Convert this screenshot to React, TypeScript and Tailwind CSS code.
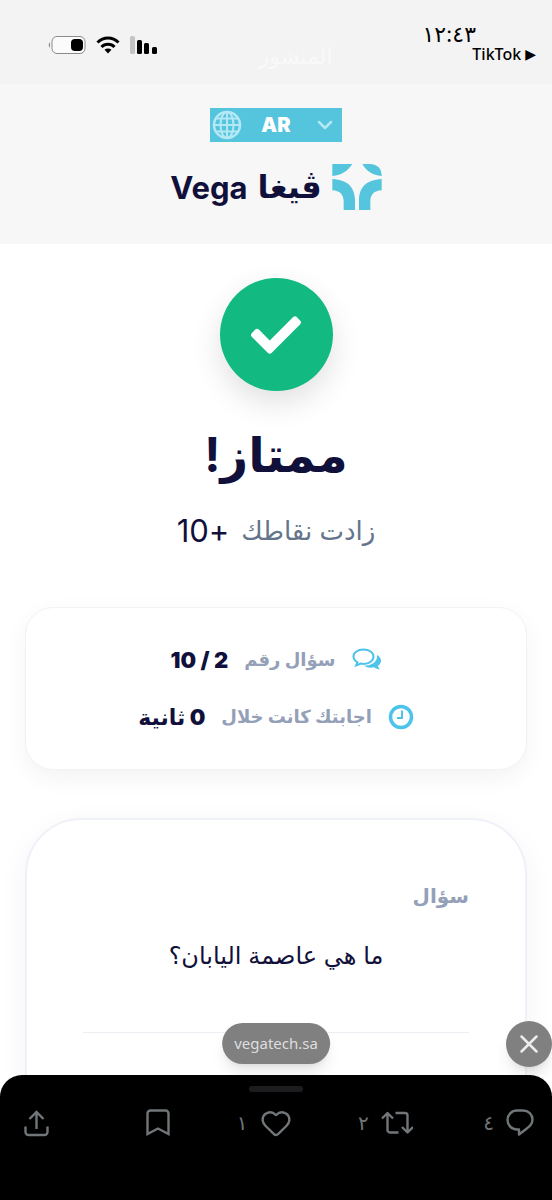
import type { ReactNode } from 'react'
import { ChevronDown, Heart, X } from 'lucide-react'
import { FaCheck } from 'react-icons/fa'

const strokeProps = {
  fill: 'none',
  stroke: 'currentColor',
  strokeWidth: 2.4,
  strokeLinejoin: 'round' as const,
}

function BatteryIcon() {
  return (
    <svg width="38" height="18" viewBox="0 0 38 18" aria-hidden="true">
      <rect x="4" y="0.5" width="33" height="17" rx="5" fill="#fbfbfb" stroke="#8a8a8a" />
      <path d="M2 6.5C0.3 7 0.3 11 2 11.5z" fill="#8a8a8a" />
      <rect x="23" y="3" width="12" height="12" rx="4" />
    </svg>
  )
}

function WifiIcon() {
  return (
    <svg width="24" height="18" viewBox="0 0 24 18" fill="none" stroke="#000" strokeWidth="3" aria-hidden="true">
      <path d="M1.5 6.5C7.5 0.5 16.5 0.5 22.5 6.5" />
      <path d="M5.5 11C9 7.2 15 7.2 18.5 11" />
      <path d="M8.5 13.8C10.5 12 13.5 12 15.5 13.8L12 17.5z" fill="#000" stroke="none" />
    </svg>
  )
}

function SignalIcon() {
  return (
    <svg width="27" height="18" viewBox="0 0 27 18" aria-hidden="true">
      <rect x="0" y="0" width="5" height="18" rx="1.5" fill="#c4c4c4" />
      <rect x="7" y="4" width="5" height="14" rx="1.5" />
      <rect x="14" y="7" width="5" height="11" rx="1.5" />
      <rect x="22" y="11" width="5" height="7" rx="1.5" />
    </svg>
  )
}

function GlobeIcon() {
  return (
    <svg width="30" height="30" viewBox="0 0 30 30" fill="none" stroke="currentColor" strokeWidth="2" aria-hidden="true">
      <circle cx="15" cy="15" r="13" strokeWidth="2.5" />
      <ellipse cx="15" cy="15" rx="6.5" ry="13" />
      <path d="M15 2v26M2 15h26M4 8.5h22M4 21.5h22" />
    </svg>
  )
}

function VegaMark() {
  return (
    <svg width="50" height="46" viewBox="0 0 148 138" fill="#55c5de" aria-hidden="true">
      <path d="M0 0H60C46 22 28 33 0 36z" />
      <path d="M90 0H112Q148 2 148 36C120 33 102 22 90 0z" />
      <path d="M0 45C48 48 66 70 68 106V138H34V112C34 92 22 80 0 79z" />
      <path d="M148 45C100 48 82 70 80 106V138H114V112C114 92 126 80 148 79z" />
    </svg>
  )
}

function CommentsIcon() {
  return (
    <svg width="30" height="24" viewBox="0 0 30 24" aria-hidden="true">
      <path
        d="M11.5 1.5C5.7 1.5 1.5 4.6 1.5 8.5c0 2.5 1.6 4.5 4 5.9L4 17.5c2-.4 3.5-1.1 4.6-2 1 .3 1.9.4 2.9.4 5.8 0 10-3.2 10-7.3S17.3 1.5 11.5 1.5z"
        fill="none"
        stroke="currentColor"
        strokeWidth="2"
      />
      <path
        d="M25 7c2.3 1.3 4 3.3 4 5.8 0 2.2-1.3 4-3.2 5.2.3 1.3 1.1 2.5 2.2 3.6-2.3-.2-4.2-1-5.7-2.3-4 .8-7.5.3-10.3-1.5C19 17.8 25 14 25 9z"
        fill="currentColor"
      />
    </svg>
  )
}

function ClockIcon() {
  return (
    <svg width="26" height="26" viewBox="0 0 26 26" fill="none" stroke="currentColor" aria-hidden="true">
      <circle cx="13" cy="13" r="10.5" strokeWidth="3.5" />
      <path d="M14 6.5V14H9" strokeWidth="2" />
    </svg>
  )
}

function ReplyIcon() {
  return (
    <svg width="28" height="28" viewBox="0 0 28 28" {...strokeProps}>
      <path d="M11 1.5h6c5.5 0 9.5 4 9.5 9 0 4.2-2.6 7-6 9.2L13 25.5v-5h-2C5.5 20.5 1.5 16.2 1.5 11S5.5 1.5 11 1.5z" />
    </svg>
  )
}

function RepostIcon() {
  return (
    <svg width="32" height="24" viewBox="0 0 32 24" {...strokeProps}>
      <path d="M1 7.5L6.5 2L12 7.5M6.5 2.5V19a2.5 2.5 0 0 0 2.5 2.5h8.5" />
      <path d="M14.5 2H24a2.5 2.5 0 0 1 2.5 2.5V21M21 16l5.5 5.5L32 16" />
    </svg>
  )
}

function BookmarkIcon() {
  return (
    <svg width="24" height="28" viewBox="0 0 24 28" {...strokeProps} strokeLinejoin="miter">
      <path d="M1.5 25V4.5a3 3 0 0 1 3-3h15a3 3 0 0 1 3 3V25L12 19.5z" />
    </svg>
  )
}

function ShareIcon() {
  return (
    <svg width="25" height="27" viewBox="0 0 25 27" {...strokeProps} strokeLinejoin="miter">
      <path d="M12.5 19V2M5.5 9l7-7 7 7M1.5 16.5V22a3 3 0 0 0 3 3h16a3 3 0 0 0 3-3v-5.5" />
    </svg>
  )
}

type StatRowProps = {
  icon: ReactNode
  label: string
  children: ReactNode
}

function StatRow({ icon, label, children }: StatRowProps) {
  return (
    <div className="flex items-center justify-center gap-4">
      <span className="text-[#4cc3ea]">{icon}</span>
      <dt className="text-lg leading-8 font-bold text-[#93a0b8]">{label}</dt>
      <dd className="text-[22px] leading-8 font-black text-[#10103a]">{children}</dd>
    </div>
  )
}

const actions = [
  { label: 'رد', count: '٤', icon: <ReplyIcon /> },
  { label: 'إعادة نشر', count: '٢', icon: <RepostIcon /> },
  { label: 'إعجاب', count: '١', icon: <Heart size={32} strokeWidth={1.8} /> },
  { label: 'حفظ', count: '', icon: <BookmarkIcon /> },
]

export default function App() {
  return (
    <div
      dir="rtl"
      lang="ar"
      className="flex h-screen flex-col overflow-hidden bg-white font-['Inter','DejaVu_Sans',sans-serif] text-[#10103a]"
    >
      <div className="flex h-[84px] shrink-0 items-start justify-between bg-[#f3f3f3] text-black">
        <div className="flex flex-col pt-5 pr-4">
          <span className="pr-[60px] text-[22px] leading-7">١٢:٤٣</span>
          <span
            dir="ltr"
            className="flex items-center gap-1 self-start font-['Noto_Sans','DejaVu_Sans',sans-serif] text-base leading-3 font-medium"
          >
            TikTok <span className="text-sm leading-3">▶</span>
          </span>
        </div>
        <span className="pt-10 pl-3 text-[22px] text-[#f9f9f9]">المنشور</span>
        <div dir="ltr" className="flex items-center gap-[10px] pt-9 pl-12">
          <BatteryIcon />
          <WifiIcon />
          <SignalIcon />
        </div>
      </div>

      <header className="flex shrink-0 flex-col items-center gap-[22px] bg-[#f7f7f7] pt-6 pb-[34px]">
        <label dir="ltr" className="relative flex h-[34px] w-[132px] items-center bg-[#55c5de] text-[#b4e8f4]">
          <span className="pointer-events-none absolute left-[2px]">
            <GlobeIcon />
          </span>
          <select
            aria-label="اللغة"
            className="h-full w-full appearance-none bg-transparent text-center text-xl font-black text-white [text-align-last:center]"
          >
            <option>AR</option>
            <option>EN</option>
          </select>
          <ChevronDown size={24} strokeWidth={2.5} className="pointer-events-none absolute right-[5px]" />
        </label>
        <div className="flex h-[46px] items-center gap-[10px]">
          <VegaMark />
          <span className="text-[32px] leading-none font-bold">ڤيغا</span>
          <span className="text-[31px] leading-none font-bold">Vega</span>
        </div>
      </header>

      <main className="min-h-0 flex-1 overflow-y-auto px-[25px] pt-[34px] [scrollbar-width:none]">
        <div className="flex flex-col items-center">
          <div className="flex size-[113px] items-center justify-center rounded-full bg-[#12b981] text-white shadow-[0_12px_30px_rgba(0,0,0,0.12)]">
            <FaCheck size={50} />
          </div>
          <h1 className="mt-8 text-5xl leading-[64px] font-bold">ممتاز!</h1>
          <p className="mt-6 flex items-center gap-3 text-[26px] leading-10 text-[#64748b]">
            زادت نقاطك <span className="text-[31px] text-[#10103a]">+10</span>
          </p>
        </div>

        <dl className="mt-14 flex flex-col gap-[25px] rounded-[28px] border border-[#f1f2f6] bg-white py-9 shadow-[0_8px_24px_rgba(15,23,42,0.05)]">
          <StatRow icon={<CommentsIcon />} label="سؤال رقم">
            2 / 10
          </StatRow>
          <StatRow icon={<ClockIcon />} label="اجابتك كانت خلال">
            0 <span className="font-bold">ثانية</span>
          </StatRow>
        </dl>

        <section className="mt-12 rounded-t-[56px] border-2 border-b-0 border-[#eff1f8] bg-white px-14 pt-[60px] pb-40 shadow-[0_8px_30px_rgba(15,23,42,0.05)]">
          <h2 className="text-xl leading-8 font-bold text-[#93a0b8]">سؤال</h2>
          <p className="mt-6 text-center text-2xl leading-10">ما هي عاصمة اليابان؟</p>
          <hr className="mt-14 border-[#eceef3]" />
        </section>
      </main>

      <footer className="relative shrink-0 rounded-t-[22px] bg-black pt-[11px] text-[#717679]">
        <a
          href="#site"
          dir="ltr"
          className="absolute bottom-full left-1/2 mb-[11px] flex h-[41px] -translate-x-1/2 items-center rounded-full bg-[#808080] px-3 font-['Noto_Sans',sans-serif] text-[15px] text-[#dedede] shadow-lg"
        >
          vegatech.sa
        </a>
        <button
          aria-label="إغلاق"
          className="absolute bottom-full left-full mb-2 flex size-[46px] -translate-x-full items-center justify-center rounded-full bg-[#808080] text-[#ececec] shadow-lg"
        >
          <X size={30} strokeWidth={2} />
        </button>
        <div className="mx-auto h-[6px] w-[54px] rounded-full bg-[#1d1d20]" />
        <div className="flex h-[108px] pt-[15px] pr-[18px] pl-6">
          {actions.map((action) => (
            <button key={action.label} aria-label={action.label} className="flex h-8 flex-1 items-center gap-3">
              {action.icon}
              <span className="text-xl leading-8">{action.count}</span>
            </button>
          ))}
          <button aria-label="مشاركة" className="flex h-8 items-center">
            <ShareIcon />
          </button>
        </div>
      </footer>
    </div>
  )
}
